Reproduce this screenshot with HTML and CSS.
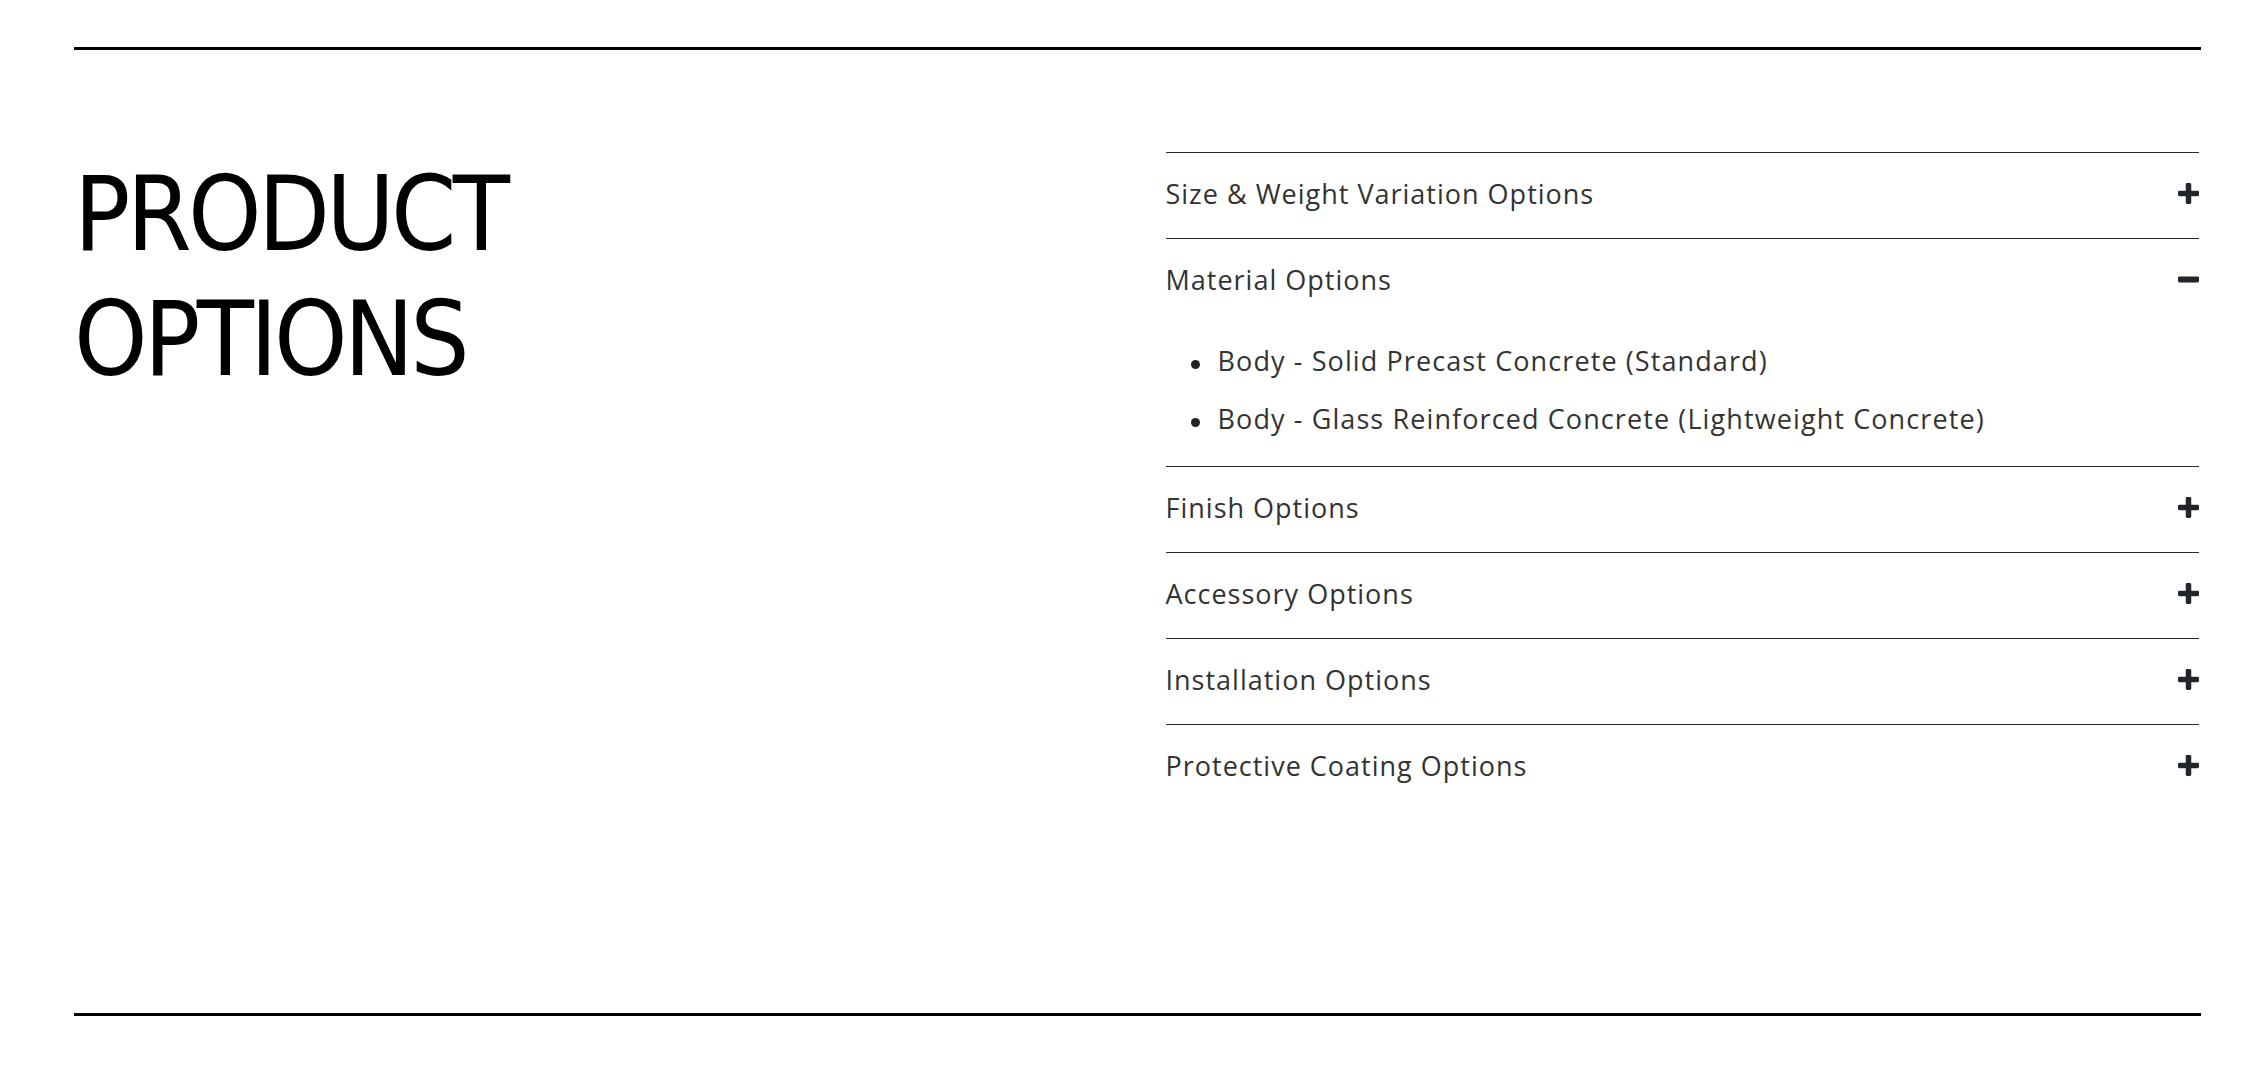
FILE: index.html
```html
<!DOCTYPE html>
<html lang="en">
<head>
<meta charset="utf-8">
<title>Product Options</title>
<link rel="stylesheet" href="styles.css">
</head>
<body>
<section class="options">
  <div class="options__title-col">
    <h2 class="options__title">PRODUCT<br>OPTIONS</h2>
  </div>
  <div class="accordion">
    <div class="acc-item">
      <div class="acc-head">
        <span class="acc-label">Size &amp; Weight Variation Options</span>
        <svg class="acc-icon" viewBox="0 0 21 21"><rect x="0" y="7.75" width="21" height="5.5" rx="1.4"/><rect x="7.75" y="0" width="5.5" height="21" rx="1.4"/></svg>
      </div>
    </div>
    <div class="acc-item acc-item--open">
      <div class="acc-head">
        <span class="acc-label">Material Options</span>
        <svg class="acc-icon" viewBox="0 0 21 21"><rect x="0" y="7.5" width="21" height="6" rx="1.4"/></svg>
      </div>
      <ul class="acc-list">
        <li>Body - Solid Precast Concrete (Standard)</li>
        <li>Body - Glass Reinforced Concrete (Lightweight Concrete)</li>
      </ul>
    </div>
    <div class="acc-item">
      <div class="acc-head">
        <span class="acc-label">Finish Options</span>
        <svg class="acc-icon" viewBox="0 0 21 21"><rect x="0" y="7.75" width="21" height="5.5" rx="1.4"/><rect x="7.75" y="0" width="5.5" height="21" rx="1.4"/></svg>
      </div>
    </div>
    <div class="acc-item">
      <div class="acc-head">
        <span class="acc-label">Accessory Options</span>
        <svg class="acc-icon" viewBox="0 0 21 21"><rect x="0" y="7.75" width="21" height="5.5" rx="1.4"/><rect x="7.75" y="0" width="5.5" height="21" rx="1.4"/></svg>
      </div>
    </div>
    <div class="acc-item">
      <div class="acc-head">
        <span class="acc-label">Installation Options</span>
        <svg class="acc-icon" viewBox="0 0 21 21"><rect x="0" y="7.75" width="21" height="5.5" rx="1.4"/><rect x="7.75" y="0" width="5.5" height="21" rx="1.4"/></svg>
      </div>
    </div>
    <div class="acc-item">
      <div class="acc-head">
        <span class="acc-label">Protective Coating Options</span>
        <svg class="acc-icon" viewBox="0 0 21 21"><rect x="0" y="7.75" width="21" height="5.5" rx="1.4"/><rect x="7.75" y="0" width="5.5" height="21" rx="1.4"/></svg>
      </div>
    </div>
  </div>
</section>
</body>
</html>
```
FILE: styles.css
```css
html, body {
  margin: 0;
  padding: 0;
  background: #fff;
}

body {
  padding-top: 47px;
  font-family: "Open Sans", "Noto Sans", sans-serif;
}

.options {
  margin: 0 60px 0 74px;
  border-top: 3px solid #000;
  border-bottom: 3px solid #000;
  padding: 102px 0 203px;
  display: grid;
  grid-template-columns: 1fr 1fr;
  column-gap: 56px;
  align-items: start;
}

.options__title {
  margin: 0;
  font-family: "DejaVu Sans Condensed", "DejaVu Sans", sans-serif;
  font-stretch: condensed;
  font-weight: 400;
  font-size: 104px;
  line-height: 125px;
  letter-spacing: -3.7px;
  color: #000;
}

.accordion {
  margin-right: 2px;
}

.acc-item {
  border-top: 1px solid #2a2a2a;
}

.acc-head {
  display: flex;
  align-items: center;
  justify-content: space-between;
  padding: 19px 0 23px;
  min-height: 43px;
}

.acc-label {
  font-size: 27px;
  line-height: 37px;
  letter-spacing: 1px;
  color: #333;
}

.acc-icon {
  width: 21px;
  height: 21px;
  fill: #222529;
  flex: none;
}

.acc-list {
  list-style: none;
  margin: 8px 0 0;
  padding: 0 0 18px 25px;
}

.acc-list li {
  display: flex;
  align-items: flex-start;
  font-size: 27px;
  line-height: 58px;
  letter-spacing: 1.1px;
  color: #333;
}

.acc-list li::before {
  content: "";
  flex: none;
  width: 9px;
  height: 9px;
  margin-top: 28px;
  margin-right: 18px;
  border-radius: 50%;
  background: #222;
}
```
